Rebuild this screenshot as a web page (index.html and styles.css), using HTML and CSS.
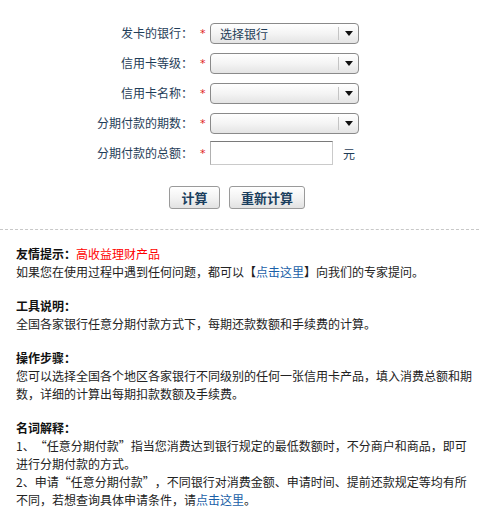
FILE: index.html
```html
<!DOCTYPE html>
<html lang="zh-CN">
<head>
<meta charset="utf-8">
<title>信用卡分期付款计算器</title>
<link rel="stylesheet" href="styles.css">
</head>
<body>
<div class="calc">
  <div class="form">
    <div class="row">
      <span class="label">发卡的银行：</span>
      <span class="req">*</span>
      <div class="select"><span class="value">选择银行</span><span class="arrow"></span></div>
    </div>
    <div class="row">
      <span class="label">信用卡等级：</span>
      <span class="req">*</span>
      <div class="select"><span class="value"></span><span class="arrow"></span></div>
    </div>
    <div class="row">
      <span class="label">信用卡名称：</span>
      <span class="req">*</span>
      <div class="select"><span class="value"></span><span class="arrow"></span></div>
    </div>
    <div class="row">
      <span class="label">分期付款的期数：</span>
      <span class="req">*</span>
      <div class="select"><span class="value"></span><span class="arrow"></span></div>
    </div>
    <div class="row">
      <span class="label">分期付款的总额：</span>
      <span class="req">*</span>
      <div class="field"><input class="input" type="text"><span class="unit">元</span></div>
    </div>
  </div>
  <div class="actions">
    <button class="btn btn-short">计算</button>
    <button class="btn btn-long">重新计算</button>
  </div>
</div>
<div class="tips">
  <p><b>友情提示：</b><span class="hot">高收益理财产品</span><br>如果您在使用过程中遇到任何问题，都可以【<a href="#">点击这里</a>】向我们的专家提问。</p>
  <p><b>工具说明：</b><br>全国各家银行任意分期付款方式下，每期还款数额和手续费的计算。</p>
  <p><b>操作步骤：</b><br>您可以选择全国各个地区各家银行不同级别的任何一张信用卡产品，填入消费总额和期数，详细的计算出每期扣款数额及手续费。</p>
  <p><b>名词解释：</b><br>1、“任意分期付款”指当您消费达到银行规定的最低数额时，不分商户和商品，即可进行分期付款的方式。<br>2、申请“任意分期付款”，不同银行对消费金额、申请时间、提前还款规定等均有所不同，若想查询具体申请条件，请<a href="#">点击这里</a>。</p>
</div>
</body>
</html>
```
FILE: styles.css
```css
* { box-sizing: border-box; }
html, body { margin: 0; padding: 0; background: #fff; }
body {
  font-family: "Noto Sans CJK SC", "Noto Sans", sans-serif;
  font-size: 12px;
  color: #222;
  width: 479px;
  text-spacing-trim: space-all;
}
.calc {
  padding-top: 21px;
  border-bottom: 1px dashed #c8c8c8;
  padding-bottom: 20px;
}
.row {
  display: grid;
  grid-template-columns: 193px 17px auto;
  align-items: center;
  height: 24px;
  margin-bottom: 6px;
}
.label {
  text-align: right;
  color: #1f3d58;
  line-height: 24px;
}
.req {
  color: #e02020;
  padding-left: 7px;
  font-family: "DejaVu Sans", sans-serif;
  font-size: 11px;
  line-height: 24px;
  position: relative;
  top: 1px;
}
.select {
  width: 149px;
  height: 21px;
  border: 1px solid #8a8a8a;
  border-radius: 4px;
  background: linear-gradient(#ffffff, #f4f4f4 50%, #e4e4e4);
  display: flex;
  align-items: center;
}
.value {
  flex: 1;
  padding-left: 9px;
  color: #1f3d58;
  line-height: 19px;
  border-right: 1px solid #c4c4c4;
  height: 13px;
  display: flex;
  align-items: center;
}
.arrow {
  width: 19px;
  height: 19px;
  display: flex;
  align-items: center;
  justify-content: center;
}
.arrow::after {
  content: "";
  width: 0;
  height: 0;
  border-left: 4px solid transparent;
  border-right: 4px solid transparent;
  border-top: 5px solid #111;
}
.field {
  display: flex;
  align-items: center;
}
.input {
  width: 123px;
  height: 24px;
  margin: 0;
  padding: 0 4px;
  border: 1px solid #cacaca;
  border-top-color: #7a7a7a;
  border-left-color: #b0b0b0;
  background: #fff;
  font: inherit;
  outline: none;
}
.unit {
  margin-left: 10px;
  color: #1f3d58;
}
.actions {
  display: flex;
  gap: 9px;
  padding-left: 169px;
  margin-top: 21px;
}
.btn {
  height: 23px;
  margin: 0;
  padding: 0;
  border: 1px solid #9a9a9a;
  border-radius: 3px;
  background: linear-gradient(#ffffff, #f3f3f3 50%, #e2e2e2);
  font-family: "Noto Sans CJK SC", sans-serif;
  font-size: 13px;
  font-weight: bold;
  color: #1b3f5e;
  line-height: 21px;
  cursor: pointer;
}
.btn-short { width: 51px; }
.btn-long { width: 76px; }
.tips {
  padding: 15px 3px 0 16px;
  line-height: 18px;
  color: #222;
}
.tips p {
  margin: 0 0 16px 0;
}
.tips b {
  font-weight: bold;
  color: #111;
}
.hot {
  color: #f00;
}
.tips a {
  color: #1a5fa8;
  text-decoration: none;
}
```
